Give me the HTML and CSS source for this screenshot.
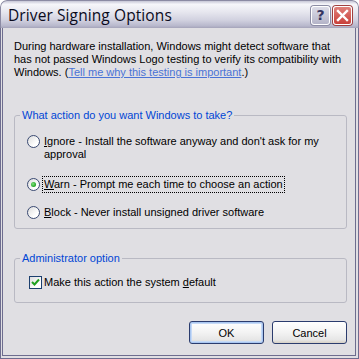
FILE: index.html
```html
<!DOCTYPE html>
<html>
  <head>
    <meta charset="utf-8">
    <title>Driver Signing Options</title>
    <link rel="stylesheet" href="styles.css">
  </head>
  <body>
    <div class="window">
      <div class="titlebar">
        <span class="title">Driver Signing Options</span>
        <span class="tb-btn help">?</span>
        <span class="tb-btn close">
          <svg width="13" height="13" viewBox="0 0 13 13">
            <path d="M2 2 L11 11 M11 2 L2 11" stroke="#fff" stroke-width="2.4" stroke-linecap="square"/>
          </svg>
        </span>
      </div>
      <div class="content">
        <p class="intro">During hardware installation, Windows might detect software that<br>has not passed Windows Logo testing to verify its compatibility with<br>Windows. (<a href="#">Tell me why this testing is important</a>.)</p>

        <fieldset class="group first">
          <legend>What action do you want Windows to take?</legend>
          <label class="option">
            <span class="radio"></span>
            <span><u>I</u>gnore - Install the software anyway and don't ask for my<br>approval</span>
          </label>
          <label class="option">
            <span class="radio checked"></span>
            <span class="focus"><u>W</u>arn - Prompt me each time to choose an action</span>
          </label>
          <label class="option">
            <span class="radio"></span>
            <span><u>B</u>lock - Never install unsigned driver software</span>
          </label>
        </fieldset>

        <fieldset class="group admin">
          <legend>Administrator option</legend>
          <label class="option">
            <span class="check">
              <svg width="9" height="9" viewBox="0 0 9 9">
                <path d="M1 4 L3.5 6.5 L8 1.5" fill="none" stroke="#21a121" stroke-width="2"/>
              </svg>
            </span>
            <span>Make this action the system <u>d</u>efault</span>
          </label>
        </fieldset>

        <div class="buttons">
          <button class="btn default">OK</button>
          <button class="btn">Cancel</button>
        </div>
      </div>
    </div>
  </body>
</html>
```

FILE: styles.css
```css
html, body {
  margin: 0;
  padding: 0;
}
body {
  background: #fff;
  font-family: "Liberation Sans", Arial, sans-serif;
  font-size: 11px;
  color: #000;
}
.window {
  width: 359px;
  height: 359px;
  box-sizing: border-box;
  background: #e0dfe3;
  border-radius: 7px 7px 0 0;
  overflow: hidden;
  display: flex;
  flex-direction: column;
}
.titlebar {
  height: 28px;
  box-sizing: border-box;
  flex: none;
  display: flex;
  align-items: center;
  padding: 1px 6px 0 7px;
  background: linear-gradient(#c7c7d6 0%, #f6f6fa 12%, #e7e7ef 40%, #d2d2e0 70%, #b8b8cc 92%, #a4a3b9 100%);
  border: 1px solid #8b8aa3;
  border-bottom: none;
  border-radius: 7px 7px 0 0;
}
.title {
  flex: 1;
  font-family: "Open Sans", "DejaVu Sans", sans-serif;
  font-size: 15.5px;
  color: #0a0a1c;
  letter-spacing: 0.1px;
}
.tb-btn {
  width: 19px;
  height: 19px;
  box-sizing: border-box;
  border: 1px solid #fff;
  border-radius: 3px;
  display: flex;
  align-items: center;
  justify-content: center;
}
.help {
  background: linear-gradient(#dcdce8, #b4b4c8);
  box-shadow: 0 0 0 1px #8c8ca4;
  color: #353561;
  font-family: "DejaVu Sans", sans-serif;
  font-weight: bold;
  font-size: 14px;
}
.close {
  background: linear-gradient(#e0807a, #c9403a);
  box-shadow: 0 0 0 1px #a04040;
  margin-left: 3px;
}
.content {
  flex: 1;
  border-style: double;
  border-color: #6e6d8f;
  border-width: 0 4px 4px 3px;
  padding: 12px 7px 0 11px;
}
.intro {
  margin: 0;
  line-height: 13px;
}
.intro a {
  color: #4a73d6;
  text-decoration: underline;
}
.group {
  margin: 0;
  border: 1px solid #b9b9c3;
  border-radius: 3px;
  padding: 0 0 0 12px;
  width: 333px;
  box-sizing: border-box;
}
.group legend {
  color: #0046d5;
  padding: 0 2px;
  margin-left: -7px;
  line-height: 13px;
}
.first {
  margin-top: 30px;
  padding-top: 13px;
  padding-bottom: 9px;
}
.admin {
  margin-top: 23px;
  padding-top: 11px;
  padding-bottom: 13px;
}
.option {
  display: flex;
  align-items: flex-start;
  line-height: 13px;
  margin-bottom: 15px;
}
.first .option:first-of-type {
  margin-bottom: 17px;
}
.option:last-child {
  margin-bottom: 0;
}
.radio {
  flex: none;
  width: 13px;
  height: 13px;
  box-sizing: border-box;
  border-radius: 50%;
  border: 1px solid #3a4a72;
  background: linear-gradient(135deg, #dcdcdc, #fff 70%);
  margin-right: 4px;
  display: flex;
  align-items: center;
  justify-content: center;
}
.radio.checked::after {
  content: "";
  width: 5px;
  height: 5px;
  border-radius: 50%;
  background: radial-gradient(circle at 40% 40%, #7fe37f, #21a121 70%);
}
.focus {
  outline: 1px dotted #000;
  outline-offset: 1px;
}
.check {
  flex: none;
  width: 13px;
  height: 13px;
  box-sizing: border-box;
  border: 1px solid #1c3f6e;
  background: linear-gradient(135deg, #dcdcdc, #fff 70%);
  margin: 0 2px 0 2px;
  display: flex;
  align-items: center;
  justify-content: center;
}
.buttons {
  display: flex;
  justify-content: flex-end;
  gap: 8px;
  width: 333px;
  margin-top: 18px;
}
.btn {
  width: 75px;
  height: 23px;
  font-family: "Liberation Sans", Arial, sans-serif;
  font-size: 11px;
  color: #000;
  border: 1px solid #2b3c6e;
  border-radius: 3px;
  background: linear-gradient(#fff 0%, #f3f3f3 50%, #e6e6e6 85%, #d6d0c5 100%);
  padding: 0;
}
.btn.default {
  box-shadow: inset 0 0 0 1px #a9c6f0, inset 0 0 0 2px #c6daf7;
}
```
